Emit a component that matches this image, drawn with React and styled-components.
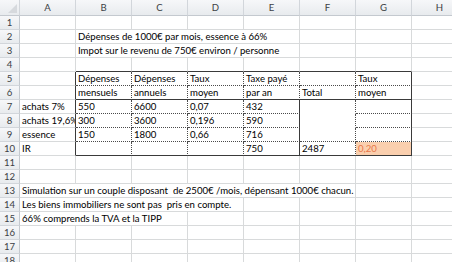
import React from 'react'
import styled, { createGlobalStyle } from 'styled-components'

const GlobalStyle = createGlobalStyle`
  html, body {
    margin: 0;
    padding: 0;
    background: #fff;
  }
  body {
    width: 452px;
    height: 262px;
    overflow: hidden;
  }
`

const LINE = {
  grid: '1px solid #d8dadb',
  solid: '1px solid #3a3a3a',
  dot: '1px dotted #4a4a4a',
  none: '1px solid #fff',
}

const COLS = ['A', 'B', 'C', 'D', 'E', 'F', 'G', 'H']
const ROW_COUNT = 18

const Sheet = styled.div`
  display: grid;
  grid-template-columns: 20px repeat(8, 56px);
  grid-template-rows: 16px repeat(${ROW_COUNT}, 14px);
  width: 452px;
  height: 262px;
  overflow: hidden;
  font-family: Lato, 'Liberation Sans', sans-serif;
  font-size: 9.6px;
  color: #000;
`

const Head = styled.div`
  box-sizing: border-box;
  display: flex;
  align-items: center;
  justify-content: center;
  background: linear-gradient(#f6f7f9, #e8ebee);
  border-right: 1px solid #d2d6db;
  border-bottom: 1px solid #c4c9cf;
  color: #3c3f44;
  line-height: 13px;
`

const Corner = styled(Head)`
  justify-content: flex-end;
  align-items: flex-end;
  padding: 0 2px 2px 0;
`

const RowHead = styled(Head)`
  border-bottom: 1px solid #d2d6db;
  border-right: 1px solid #c4c9cf;
`

const Cell = styled.div`
  box-sizing: border-box;
  grid-column: span ${p => p.$span || 1};
  border-right: ${p => LINE[p.$r || 'grid']};
  border-bottom: ${p => LINE[p.$b || 'grid']};
  background: ${p => p.$fill || '#fff'};
  color: ${p => p.$color || '#000'};
  padding: 0 0 0 2px;
  line-height: 13px;
  white-space: pre;
  overflow: hidden;
`

// row number -> list of cells (columns A..H, spans consume columns)
const c = (text = '', opts = {}) => ({ text, ...opts })

const tableRow = (a, cells) => [
  c(a, { r: 'solid' }),
  ...cells,
  c(),
]

const data = {
  2: [c(), c('Dépenses de 1000€ par mois, essence à 66%', { span: 4 }), c(), c(), c()],
  3: [c(), c('Impot sur le revenu de 750€ environ / personne', { span: 4 }), c(), c(), c()],
  4: [c(), c('', { b: 'solid' }), c('', { b: 'solid' }), c('', { b: 'solid' }), c('', { b: 'solid' }), c('', { b: 'solid' }), c('', { b: 'solid' }), c()],
  5: tableRow('', [
    c('Dépenses', { r: 'dot', b: 'dot' }),
    c('Dépenses', { r: 'dot', b: 'dot' }),
    c('Taux', { r: 'dot', b: 'dot' }),
    c('Taxe payé', { r: 'dot', b: 'dot' }),
    c('', { r: 'dot', b: 'dot' }),
    c('Taux', { r: 'solid', b: 'dot' }),
  ]),
  6: tableRow('', [
    c('mensuels', { r: 'dot', b: 'solid' }),
    c('annuels', { r: 'dot', b: 'solid' }),
    c('moyen', { r: 'dot', b: 'solid' }),
    c('par an', { r: 'dot', b: 'solid' }),
    c('Total', { r: 'dot', b: 'solid' }),
    c('moyen', { r: 'solid', b: 'solid' }),
  ]),
  7: tableRow('achats 7%', [
    c('550', { r: 'dot', b: 'dot' }),
    c('6600', { r: 'dot', b: 'dot' }),
    c('0,07', { r: 'dot', b: 'dot' }),
    c('432', { r: 'solid', b: 'dot' }),
    c('', { r: 'dot', b: 'none' }),
    c('', { r: 'solid', b: 'dot' }),
  ]),
  8: tableRow('achats 19,6%', [
    c('300', { r: 'dot', b: 'dot' }),
    c('3600', { r: 'dot', b: 'dot' }),
    c('0,196', { r: 'dot', b: 'dot' }),
    c('590', { r: 'solid', b: 'dot' }),
    c('', { r: 'dot', b: 'none' }),
    c('', { r: 'solid', b: 'dot' }),
  ]),
  9: tableRow('essence', [
    c('150', { r: 'dot', b: 'dot' }),
    c('1800', { r: 'dot', b: 'dot' }),
    c('0,66', { r: 'dot', b: 'dot' }),
    c('716', { r: 'solid', b: 'dot' }),
    c('', { r: 'dot', b: 'dot' }),
    c('', { r: 'solid', b: 'dot' }),
  ]),
  10: tableRow('IR', [
    c('', { r: 'dot', b: 'solid' }),
    c('', { r: 'dot', b: 'solid' }),
    c('', { r: 'dot', b: 'solid' }),
    c('750', { r: 'solid', b: 'solid' }),
    c('2487', { r: 'dot', b: 'solid' }),
    c('0,20', { r: 'solid', b: 'solid', fill: '#facfae', color: '#e8784a' }),
  ]),
  13: [c('Simulation sur un couple disposant  de 2500€ /mois, dépensant 1000€ chacun.', { span: 6 }), c(), c()],
  14: [c('Les biens immobiliers ne sont pas  pris en compte.', { span: 4 }), c(), c(), c(), c()],
  15: [c('66% comprends la TVA et la TIPP', { span: 3 }), c(), c(), c(), c(), c()],
}

const emptyRow = () => COLS.map(() => c())

const CornerMark = () => (
  <svg width="9" height="9" viewBox="0 0 9 9">
    <polygon points="9,0 9,9 0,9" fill="#d6d9dd" />
  </svg>
)

const App = () => {
  const rows = Array.from({ length: ROW_COUNT }, (_, i) => i + 1)
  return (
    <>
      <GlobalStyle />
      <Sheet>
        <Corner><CornerMark /></Corner>
        {COLS.map(col => <Head key={col}>{col}</Head>)}
        {rows.map(n => (
          <React.Fragment key={n}>
            <RowHead>{n}</RowHead>
            {(data[n] || emptyRow()).map((cell, i) => (
              <Cell
                key={i}
                $span={cell.span}
                $r={cell.r}
                $b={cell.b}
                $fill={cell.fill}
                $color={cell.color}
              >
                {cell.text}
              </Cell>
            ))}
          </React.Fragment>
        ))}
      </Sheet>
    </>
  )
}

export default App
